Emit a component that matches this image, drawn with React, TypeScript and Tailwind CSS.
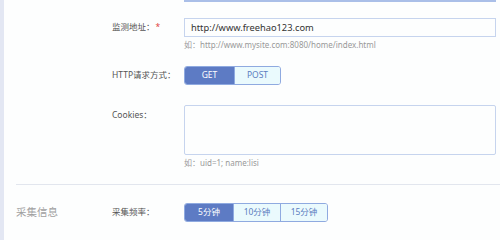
import React from "react";

const font = { fontFamily: '"Noto Sans", "Noto Sans CJK SC", sans-serif' };

interface SegProps {
  items: string[];
  active: number;
  widths: string[];
}

const Segmented = ({ items, active, widths }: SegProps) => (
  <div className="flex h-[19px] rounded-[3px] border border-[#8faae0] overflow-hidden">
    {items.map((item, i) => (
      <div
        key={item}
        className={`${widths[i]} flex items-center justify-center text-[8.5px] ${
          i === active ? "bg-[#5d7bc4] text-white" : "bg-[#eafafd] text-[#5b7dc0]"
        } ${i > 0 ? "border-l border-[#8faae0]" : ""}`}
      >
        {item}
      </div>
    ))}
  </div>
);

export default function App() {
  return (
    <div className="w-[500px] h-[240px] flex bg-[#fdfefe] overflow-hidden" style={font}>
      {/* left rail */}
      <div className="w-[4px] h-full bg-[#e3e7f3]" />

      <div className="flex-1 flex flex-col">
        {/* bottom edge of the box above */}
        <div className="ml-[180px] w-[312px] h-[2px] bg-[#aabfe8]" />

        <div className="flex flex-col pl-[108px]">
          {/* 监测地址 */}
          <div className="flex mt-[16px]">
            <div className="w-[72px] h-[19px] flex items-center whitespace-nowrap text-[8.5px] text-[#555]">
              监测地址：<span className="ml-[1px] text-[#e04040]">*</span>
            </div>
            <div className="flex flex-col">
              <div className="w-[312px] h-[19px] border border-[#c6d4ee] flex items-center px-[6px] text-[9.3px] text-[#333]">
                http://www.freehao123.com
              </div>
              <div className="mt-[1px] text-[8px] text-[#999] leading-[13px]">
                如：http://www.mysite.com:8080/home/index.html
              </div>
            </div>
          </div>

          {/* HTTP请求方式 */}
          <div className="flex mt-[15px]">
            <div className="w-[72px] h-[19px] flex items-center whitespace-nowrap text-[8.5px] text-[#555]">
              HTTP请求方式：
            </div>
            <Segmented items={["GET", "POST"]} active={0} widths={["w-[49px]", "w-[46px]"]} />
          </div>

          {/* Cookies */}
          <div className="flex mt-[20px]">
            <div className="w-[72px] pt-[4px] whitespace-nowrap text-[8.5px] text-[#555]">Cookies：</div>
            <div className="flex flex-col">
              <div className="w-[312px] h-[50px] border border-[#c6d4ee] rounded-[2px]" />
              <div className="mt-[1px] text-[8px] text-[#999] leading-[13px]">如：uid=1; name:lisi</div>
            </div>
          </div>
        </div>

        {/* separator */}
        <div className="ml-[12px] mt-[15px] h-px bg-[#e2e6ee]" />

        {/* 采集信息 */}
        <div className="flex items-center mt-[18px] pl-[12px]">
          <div className="w-[96px] text-[10.5px] text-[#a0a0a0]">采集信息</div>
          <div className="w-[72px] whitespace-nowrap text-[8.5px] text-[#555]">采集频率：</div>
          <Segmented
            items={["5分钟", "10分钟", "15分钟"]}
            active={0}
            widths={["w-[48px]", "w-[47px]", "w-[47px]"]}
          />
        </div>
      </div>
    </div>
  );
}
